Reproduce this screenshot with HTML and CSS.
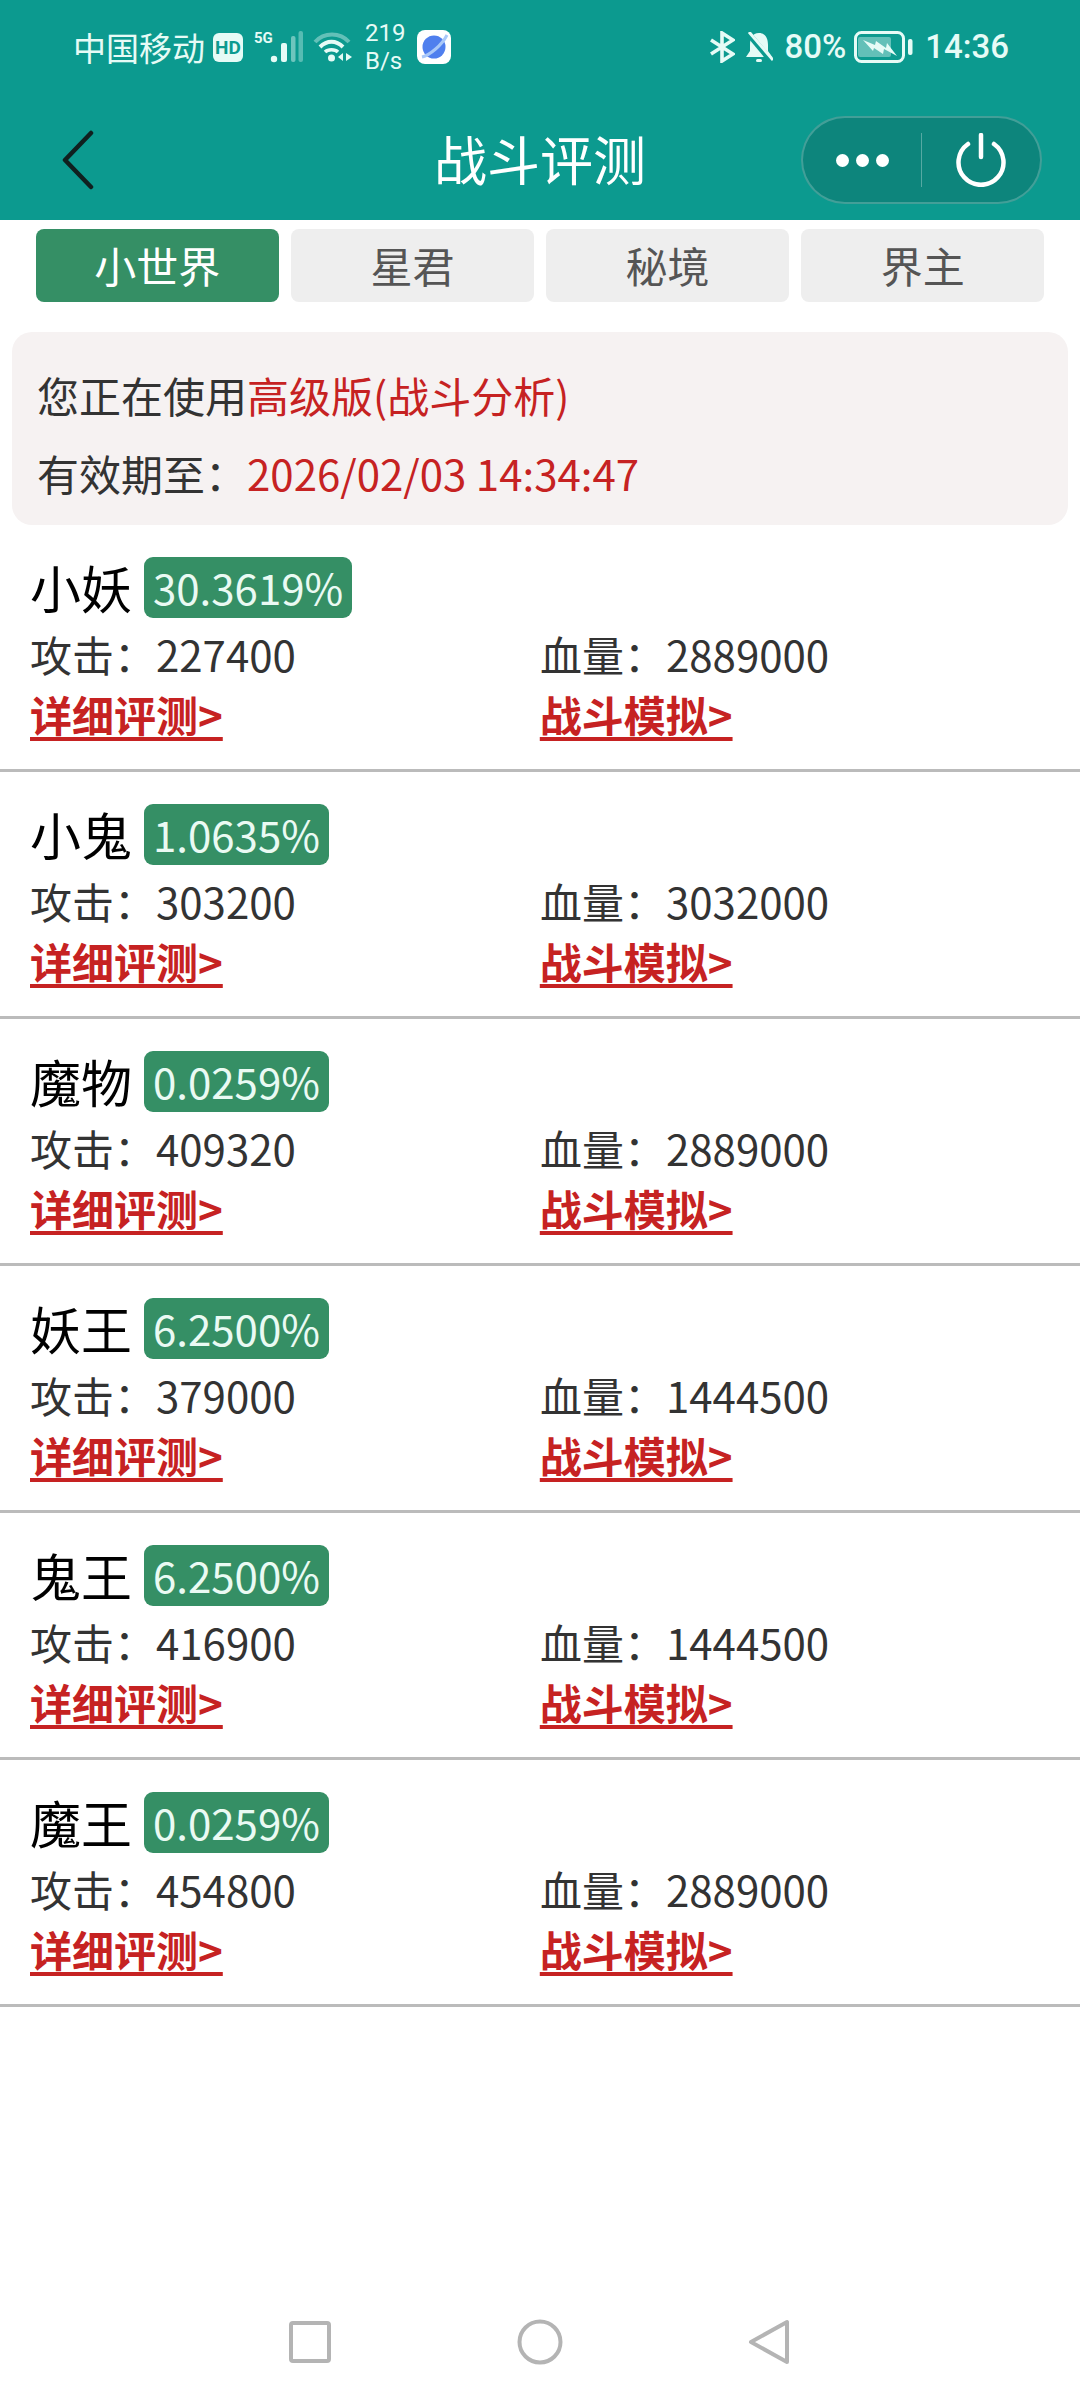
FILE: index.html
```html
<!DOCTYPE html>
<html>
  <head>
    <meta charset="UTF-8" />
    <title>战斗评测</title>
    <link rel="stylesheet" href="styles.css">
  </head>

  <body>
    <div class="page">
      <header class="top">
        <div class="status">
          <div class="status-left">
            <span class="carrier">中国移动</span>
            <span class="hd">HD</span>
            <svg class="signal" width="49" height="34" viewBox="0 0 49 34">
              <text x="0" y="13" class="five-g">5G</text>
              <circle cx="20" cy="29" r="3.2" fill="#e6fbf6"/>
              <rect x="27" y="13" width="6" height="19" rx="2" fill="#e6fbf6"/>
              <rect x="37" y="6" width="4.5" height="26" rx="2" fill="#e6fbf6" opacity=".45"/>
              <rect x="44.5" y="1" width="4.5" height="31" rx="2" fill="#e6fbf6" opacity=".35"/>
            </svg>
            <svg class="wifi" width="39" height="30" viewBox="0 0 39 30" fill="none">
              <path d="M2 10C11 0 27 0 36 10" stroke="#e6fbf6" stroke-width="4" opacity=".4"/>
              <path d="M7 15C14 8 23 8 30 15" stroke="#e6fbf6" stroke-width="4"/>
              <path d="M12 20C15 17 22 17 25 20" stroke="#e6fbf6" stroke-width="3.5"/>
              <circle cx="18.5" cy="26" r="3.5" fill="#e6fbf6"/>
              <path d="M30 21v8l-5-4zM33 21v8l6-4z" fill="#e6fbf6"/>
            </svg>
            <span class="speed">219<br>B/s</span>
            <svg class="planet" width="34" height="34" viewBox="0 0 34 34">
              <rect width="34" height="34" rx="8" fill="#fff"/>
              <circle cx="17" cy="17" r="11.5" fill="#4f7fee"/>
              <path d="M5 27C13 25 25 15 30 5" stroke="#a9c8f8" stroke-width="3" fill="none"/>
            </svg>
          </div>
          <div class="status-right">
            <svg width="26" height="32" viewBox="0 0 26 32" fill="none" stroke="#e6fbf6" stroke-width="3.6">
              <path d="M2 9L24 23L13 30V2L24 9L2 23"/>
            </svg>
            <svg class="bell" width="28" height="30" viewBox="0 0 28 30">
              <path d="M14 1C7 1 5 7 5 13V19L1 25H27L23 19V13C23 7 21 1 14 1Z" fill="#e6fbf6"/>
              <rect x="11" y="27" width="6" height="3" rx="1.5" fill="#e6fbf6"/>
              <path d="M2 0L27 30" stroke="#0c9a8f" stroke-width="6"/>
              <path d="M4 0L28 28" stroke="#e6fbf6" stroke-width="3"/>
            </svg>
            <span class="pct">80%</span>
            <svg class="battery" width="59" height="32" viewBox="0 0 59 32">
              <rect x="1.5" y="1.5" width="48" height="29" rx="6" fill="none" stroke="#e6fbf6" stroke-width="3"/>
              <rect x="4" y="6" width="33" height="20" rx="2" fill="#e6fbf6" opacity=".4"/>
              <path d="M9 9L21 14L22 10L32 17L33 12L43 25L30 18L29 23L20 17L19 20Z" fill="#e6fbf6"/>
              <rect x="54" y="8" width="4.5" height="16" rx="2" fill="#e6fbf6"/>
            </svg>
            <span class="time">14:36</span>
          </div>
        </div>
        <div class="nav">
          <svg class="back" width="32" height="60" viewBox="0 0 32 60" fill="none">
            <path d="M29 3L3 30L29 57" stroke="#10201f" stroke-width="4.5" stroke-linecap="round" stroke-linejoin="round"/>
          </svg>
          <h1 class="title">战斗评测</h1>
          <div class="capsule">
            <div class="cap-dots"><i></i><i></i><i></i></div>
            <div class="cap-line"></div>
            <svg class="cap-power" width="54" height="54" viewBox="0 0 54 54" fill="none">
              <path d="M14 11A22.5 22.5 0 1 0 40 11" stroke="#fff" stroke-width="4.5" stroke-linecap="round"/>
              <path d="M27 2V24" stroke="#fff" stroke-width="4.5" stroke-linecap="round"/>
            </svg>
          </div>
        </div>
      </header>

      <div class="tabs">
        <div class="tab tab-on">小世界</div>
        <div class="tab">星君</div>
        <div class="tab">秘境</div>
        <div class="tab">界主</div>
      </div>

      <div class="notice">
        <p>您正在使用<span class="red">高级版(战斗分析)</span></p>
        <p>有效期至：<span class="red">2026/02/03 14:34:47</span></p>
      </div>

      <ul class="list">
        <li class="item">
          <div class="name-row"><span class="name">小妖</span><span class="rate">30.3619%</span></div>
          <div class="cols"><span>攻击：227400</span><span>血量：2889000</span></div>
          <div class="cols links"><a>详细评测&gt;</a><a>战斗模拟&gt;</a></div>
        </li>
        <li class="item">
          <div class="name-row"><span class="name">小鬼</span><span class="rate">1.0635%</span></div>
          <div class="cols"><span>攻击：303200</span><span>血量：3032000</span></div>
          <div class="cols links"><a>详细评测&gt;</a><a>战斗模拟&gt;</a></div>
        </li>
        <li class="item">
          <div class="name-row"><span class="name">魔物</span><span class="rate">0.0259%</span></div>
          <div class="cols"><span>攻击：409320</span><span>血量：2889000</span></div>
          <div class="cols links"><a>详细评测&gt;</a><a>战斗模拟&gt;</a></div>
        </li>
        <li class="item">
          <div class="name-row"><span class="name">妖王</span><span class="rate">6.2500%</span></div>
          <div class="cols"><span>攻击：379000</span><span>血量：1444500</span></div>
          <div class="cols links"><a>详细评测&gt;</a><a>战斗模拟&gt;</a></div>
        </li>
        <li class="item">
          <div class="name-row"><span class="name">鬼王</span><span class="rate">6.2500%</span></div>
          <div class="cols"><span>攻击：416900</span><span>血量：1444500</span></div>
          <div class="cols links"><a>详细评测&gt;</a><a>战斗模拟&gt;</a></div>
        </li>
        <li class="item">
          <div class="name-row"><span class="name">魔王</span><span class="rate">0.0259%</span></div>
          <div class="cols"><span>攻击：454800</span><span>血量：2889000</span></div>
          <div class="cols links"><a>详细评测&gt;</a><a>战斗模拟&gt;</a></div>
        </li>
      </ul>

      <footer class="sysbar">
        <svg width="44" height="44" viewBox="0 0 44 44" fill="none">
          <rect x="3" y="3" width="38" height="38" rx="2" stroke="#b4b4b4" stroke-width="4"/>
        </svg>
        <svg width="46" height="46" viewBox="0 0 46 46" fill="none">
          <circle cx="23" cy="23" r="20.5" stroke="#b4b4b4" stroke-width="4"/>
        </svg>
        <svg width="42" height="46" viewBox="0 0 42 46" fill="none">
          <path d="M39 3V43L3 23Z" stroke="#b4b4b4" stroke-width="4" stroke-linejoin="round"/>
        </svg>
      </footer>
    </div>
  </body>
</html>
```

FILE: styles.css
```css
* {
  box-sizing: border-box;
}

html,
body {
  margin: 0;
  padding: 0;
  background: white;
}

body {
  font-family: "Noto Sans CJK SC", "Noto Sans", sans-serif;
  color: #333;
}

.page {
  width: 1080px;
  height: 2400px;
  display: flex;
  flex-direction: column;
  overflow: hidden;
}

/* header */
.top {
  height: 220px;
  background: #0c9a8f;
  flex-shrink: 0;
}

.status {
  height: 76px;
  padding: 18px 71px 0 73px;
  display: flex;
  justify-content: space-between;
  align-items: center;
  color: #e6fbf6;
}

.status-left,
.status-right {
  display: flex;
  align-items: center;
}

.carrier {
  font-size: 33px;
  line-height: 40px;
}

.hd {
  width: 30px;
  height: 29px;
  margin-left: 8px;
  border-radius: 6px;
  background: #e6fbf6;
  color: #0c9a8f;
  font: bold 19px/29px "Roboto", sans-serif;
  text-align: center;
}

.five-g {
  font: bold 15px "Roboto", sans-serif;
  fill: #e6fbf6;
}

.signal {
  margin-left: 11px;
}

.wifi {
  margin-left: 10px;
}

.speed {
  margin-left: 13px;
  width: 37px;
  font: 24px/28px "Roboto", sans-serif;
  text-align: center;
}

.planet {
  margin-left: 15px;
}

.bell {
  margin-left: 10px;
}

.pct {
  margin-left: 11px;
  font: 500 33px/40px "Roboto", sans-serif;
}

.battery {
  margin-left: 8px;
}

.time {
  margin-left: 12px;
  font: 500 33px/40px "Roboto", sans-serif;
}

.nav {
  position: relative;
  height: 144px;
  display: flex;
  align-items: center;
  padding: 24px 38px 0 62px;
  justify-content: space-between;
}

.title {
  margin: 0;
  font-size: 53px;
  font-weight: normal;
  line-height: 70px;
  color: white;
  position: absolute;
  left: 0;
  right: 0;
  top: 47px;
  text-align: center;
}

.capsule {
  width: 241px;
  height: 88px;
  border-radius: 44px;
  background: #0d857c;
  border: 2px solid rgba(255, 255, 255, 0.22);
  display: flex;
  align-items: center;
  position: relative;
}

.cap-dots {
  width: 118px;
  display: flex;
  justify-content: center;
  gap: 7px;
}

.cap-dots i {
  width: 13px;
  height: 13px;
  border-radius: 50%;
  background: white;
}

.cap-line {
  width: 1px;
  height: 54px;
  background: rgba(255, 255, 255, 0.3);
}

.cap-power {
  margin-left: 32px;
}

/* tabs */
.tabs {
  display: flex;
  gap: 12.5px;
  padding: 9px 36px 0;
}

.tab {
  width: 243px;
  height: 73px;
  border-radius: 8px;
  background: #eeeeee;
  color: #555;
  font-size: 42px;
  line-height: 72px;
  text-align: center;
}

.tab-on {
  background: #358f65;
  color: white;
}

/* notice */
.notice {
  margin: 30px 12px 0;
  height: 193px;
  padding: 24px 25px 0;
  background: #f6f2f2;
  border-radius: 20px;
  font-size: 42px;
  line-height: 78px;
}

.notice p {
  margin: 0;
}

.red {
  color: #c62222;
}

/* list */
.list {
  margin: 0;
  padding: 0;
  list-style: none;
  flex: 1;
}

.item {
  height: 247px;
  padding: 32px 0 0 30px;
  border-bottom: 3px solid #bbbbbb;
  font-size: 42px;
}

.name-row {
  display: flex;
  align-items: center;
  height: 61px;
}

.name {
  font-size: 51px;
  line-height: 61px;
  color: #000;
  width: 114px;
}

.rate {
  height: 61px;
  padding: 0 9px;
  border-radius: 9px;
  background: #358f65;
  color: #eafaf3;
  font-size: 42px;
  line-height: 59px;
}

.cols {
  display: flex;
  margin-top: 5px;
  line-height: 62px;
}

.cols > * {
  width: 510px;
}

.links {
  margin-top: -1px;
  line-height: 60px;
}

.links a {
  width: auto;
  color: #c62222;
  font-weight: bold;
  text-decoration: underline;
  text-decoration-thickness: 4px;
  text-underline-offset: 5px;
}

.links a:first-child {
  margin-right: 317px;
}

/* system nav */
.sysbar {
  height: 118px;
  flex-shrink: 0;
  display: flex;
  align-items: center;
  padding: 2px 290px 0 288px;
  justify-content: space-between;
}
```
